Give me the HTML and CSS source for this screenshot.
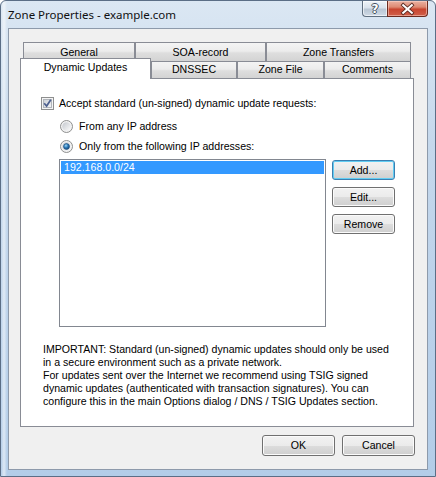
FILE: index.html
```html
<!DOCTYPE html>
<html>
<head>
<meta charset="utf-8">
<link rel="stylesheet" href="styles.css">
</head>
<body>
<div class="window">
  <div class="titlebar">
    <div class="title">Zone Properties - example.com</div>
    <div class="caption">
      <div class="capbtn help"><span>?</span></div>
      <div class="capbtn close">
        <svg width="41" height="16" viewBox="0 0 41 16">
          <path d="M16 4 L25 12 M25 4 L16 12" stroke="#5a2a22" stroke-width="4" stroke-linecap="square" fill="none"/>
          <path d="M16 4 L25 12 M25 4 L16 12" stroke="#ffffff" stroke-width="2.2" stroke-linecap="square" fill="none"/>
        </svg>
      </div>
    </div>
  </div>
  <div class="client">
    <div class="tabs">
      <div class="tabrow row1">
        <div class="tab t-general">General</div>
        <div class="tab t-soa">SOA-record</div>
        <div class="tab t-zt">Zone Transfers</div>
      </div>
      <div class="tabrow row2">
        <div class="tab selected t-du">Dynamic Updates</div>
        <div class="tab t-dnssec">DNSSEC</div>
        <div class="tab t-zf">Zone File</div>
        <div class="tab t-com">Comments</div>
      </div>
    </div>
    <div class="panel">
      <div class="check-row">
        <svg class="checkbox" width="13" height="13" viewBox="0 0 13 13">
          <defs>
            <linearGradient id="cbg" x1="0" y1="0" x2="1" y2="1">
              <stop offset="0" stop-color="#c9ced5"/>
              <stop offset="1" stop-color="#f7f7f7"/>
            </linearGradient>
          </defs>
          <rect x="0.5" y="0.5" width="12" height="12" fill="#f4f4f4" stroke="#8e8f8f"/>
          <rect x="2.5" y="2.5" width="8" height="8" fill="url(#cbg)" stroke="#b1b5bb"/>
          <path d="M3.2 6.3 L5.6 9 L9.8 2.8" fill="none" stroke="#4c5f8e" stroke-width="1.7"/>
        </svg>
        <span>Accept standard (un-signed) dynamic update requests:</span>
      </div>
      <div class="radio-row first">
        <svg class="radio" width="13" height="13" viewBox="0 0 13 13">
          <defs>
            <linearGradient id="rg1" x1="0" y1="0" x2="1" y2="1">
              <stop offset="0" stop-color="#c4c8ce"/>
              <stop offset="1" stop-color="#fbfbfb"/>
            </linearGradient>
          </defs>
          <circle cx="6.5" cy="6.5" r="6" fill="#f2f2f2" stroke="#8e8f8f"/>
          <circle cx="6.5" cy="6.5" r="4.3" fill="url(#rg1)"/>
        </svg>
        <span>From any IP address</span>
      </div>
      <div class="radio-row second">
        <svg class="radio" width="13" height="13" viewBox="0 0 13 13">
          <defs>
            <linearGradient id="rg2" x1="0" y1="0" x2="1" y2="1">
              <stop offset="0" stop-color="#c4c8ce"/>
              <stop offset="1" stop-color="#fbfbfb"/>
            </linearGradient>
            <radialGradient id="rdot" cx="0.4" cy="0.35" r="0.7">
              <stop offset="0" stop-color="#9fd6f5"/>
              <stop offset="0.5" stop-color="#2a79b8"/>
              <stop offset="1" stop-color="#13406e"/>
            </radialGradient>
          </defs>
          <circle cx="6.5" cy="6.5" r="6" fill="#f2f2f2" stroke="#8e8f8f"/>
          <circle cx="6.5" cy="6.5" r="4.3" fill="url(#rg2)"/>
          <circle cx="6.5" cy="6.5" r="3" fill="url(#rdot)" stroke="#1e4f7f" stroke-width="0.6"/>
        </svg>
        <span>Only from the following IP addresses:</span>
      </div>
      <div class="ip-area">
        <div class="listbox">
          <div class="item sel">192.168.0.0/24</div>
        </div>
        <div class="side-btns">
          <div class="btn default">Add...</div>
          <div class="btn">Edit...</div>
          <div class="btn">Remove</div>
        </div>
      </div>
      <div class="note">
        <div>IMPORTANT: Standard (un-signed) dynamic updates should only be used</div>
        <div>in a secure environment such as a private network.</div>
        <div>For updates sent over the Internet we recommend using TSIG signed</div>
        <div>dynamic updates (authenticated with transaction signatures). You can</div>
        <div>configure this in the main Options dialog / DNS / TSIG Updates section.</div>
      </div>
    </div>
    <div class="footer">
      <div class="btn wide">OK</div>
      <div class="btn wide">Cancel</div>
    </div>
  </div>
</div>
</body>
</html>
```
FILE: styles.css
```css
* { box-sizing: border-box; }
html, body { margin: 0; padding: 0; background: #ffffff; }
body { font-family: "Liberation Sans", Arial, sans-serif; font-size: 10.6px; color: #000; }

.window {
  width: 436px;
  height: 477px;
  border: 1px solid #5b6e86;
  border-radius: 6px 6px 0 0;
  background:
    linear-gradient(90deg, rgba(255,255,255,0.0) 0, rgba(255,255,255,0.55) 3px, rgba(255,255,255,0) 6px),
    linear-gradient(180deg, #dbe7f3 0%, #c5d8ec 30%, #bcd2ea 60%, #b3cde8 100%);
  display: flex;
  flex-direction: column;
  overflow: hidden;
}

.titlebar {
  height: 27px;
  display: flex;
  align-items: flex-start;
  padding: 0 7px 0 7px;
}
.title {
  flex: 1;
  font-family: "Noto Sans", "Open Sans", sans-serif;
  font-size: 11.5px;
  line-height: 27px;
  color: #101010;
  white-space: nowrap;
}
.caption { display: flex; }
.capbtn {
  height: 16px;
  border: 1px solid #5f6f80;
  border-top: none;
  display: flex;
  align-items: center;
  justify-content: center;
}
.capbtn.help {
  width: 25px;
  border-radius: 0 0 0 4px;
  border-right: none;
  background: linear-gradient(180deg, #eef3f8 0%, #d9e2ec 45%, #b9c6d4 55%, #cfdae6 100%);
  box-shadow: inset 0 0 0 1px rgba(255,255,255,0.6);
}
.capbtn.help span {
  font-family: "DejaVu Sans", sans-serif;
  font-weight: bold;
  font-size: 12px;
  line-height: 14px;
  color: #ffffff;
  text-shadow: 1px 0 0 #44505e, -1px 0 0 #44505e, 0 1px 0 #44505e, 0 -1px 0 #44505e;
}
.capbtn.close {
  width: 41px;
  border-radius: 0 0 4px 0;
  border-color: #6a2a1f;
  background: linear-gradient(180deg, #eab2a2 0%, #de8a73 40%, #c8452f 55%, #d0604a 100%);
  box-shadow: inset 0 0 0 1px rgba(255,220,210,0.5);
}
.capbtn.close svg { display: block; }

.client {
  margin-left: 7px;
  width: 420px;
  height: 442px;
  border: 1px solid #8d9aab;
  background: #f0f0f0;
  display: flex;
  flex-direction: column;
}

.tabs {
  margin-top: 13px;
  margin-left: 11px;
  width: 391px;
}
.tabrow { display: flex; }
.row1 { height: 19px; padding-left: 3px; }
.row2 { height: 17px; }

.tab {
  border: 1px solid #898c95;
  border-bottom: none;
  background: linear-gradient(180deg, #f4f4f4 0%, #ececec 45%, #dedede 55%, #d3d3d3 100%);
  text-align: center;
  white-space: nowrap;
  color: #000;
}
.row1 .tab { height: 19px; line-height: 18px; }
.row2 .tab { height: 17px; line-height: 15px; }
.row2 .tab.selected {
  position: relative;
  z-index: 1;
  height: 21px;
  margin-top: -3px;
  line-height: 16px;
  background: #ffffff;
}
.t-general { width: 112px; }
.t-soa { width: 131px; }
.t-zt { width: 145px; }
.t-du { width: 131px; }
.t-dnssec { width: 86px; }
.t-zf { width: 87px; }
.t-com { width: 87px; }

.panel {
  margin-left: 11px;
  width: 394px;
  height: 349px;
  border: 1px solid #898c95;
  background: #ffffff;
  padding: 18px 0 0 20px;
  display: flex;
  flex-direction: column;
}

.check-row {
  display: flex;
  align-items: center;
  height: 13px;
  gap: 5px;
  line-height: 13px;
  white-space: nowrap;
}
.check-row svg, .radio-row svg { display: block; flex: none; }

.radio-row {
  display: flex;
  align-items: center;
  height: 13px;
  gap: 6px;
  padding-left: 19px;
  line-height: 13px;
  white-space: nowrap;
}
.radio-row.first { margin-top: 10px; }
.radio-row.second { margin-top: 7px; }

.ip-area {
  display: flex;
  margin-top: 6px;
  margin-left: 18px;
}
.listbox {
  width: 267px;
  height: 168px;
  border: 1px solid #828790;
  padding: 1px;
  background: #ffffff;
}
.item {
  height: 13px;
  line-height: 13px;
  padding-left: 3px;
  white-space: nowrap;
}
.item.sel { background: #3399ff; color: #ffffff; }

.side-btns {
  margin-left: 6px;
  margin-top: 1px;
  display: flex;
  flex-direction: column;
  gap: 7px;
}

.btn {
  width: 63px;
  height: 20px;
  border: 1px solid #707070;
  border-radius: 3px;
  background: linear-gradient(180deg, #f2f2f2 0%, #ebebeb 50%, #dddddd 51%, #cfcfcf 100%);
  box-shadow: inset 0 0 0 1px #fbfbfb;
  text-align: center;
  line-height: 18px;
  color: #000;
  white-space: nowrap;
}
.btn.default {
  border-color: #3c7fb1;
  box-shadow: inset 0 0 0 1px #62cdf3;
}
.btn.wide { width: 73px; height: 21px; line-height: 19px; }

.note {
  margin-top: 16px;
  margin-left: 2px;
  line-height: 13px;
  white-space: nowrap;
}

.footer {
  margin-top: 8px;
  display: flex;
  justify-content: flex-end;
  gap: 7px;
  padding-right: 12px;
}
```
